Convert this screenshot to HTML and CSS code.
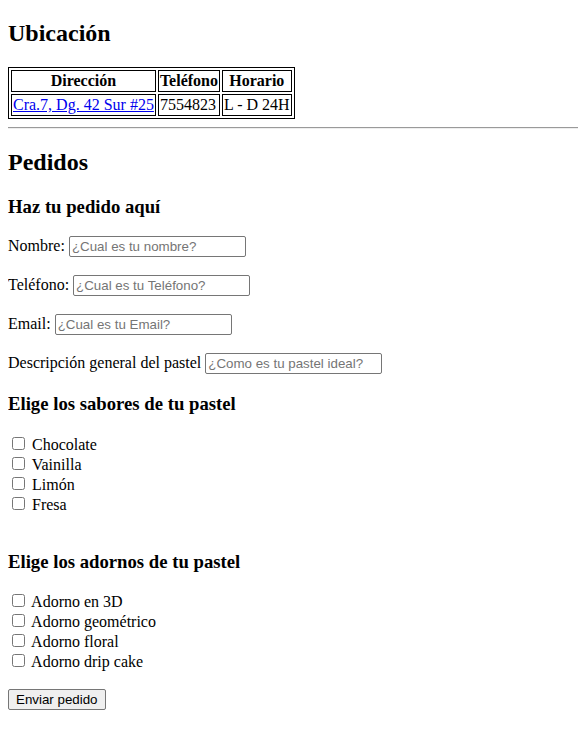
FILE: index.html
```html
<!DOCTYPE html>
<html lang="es">
<head>
<meta charset="utf-8">
<title>Pastelería</title>
<link rel="stylesheet" href="styles.css">
</head>
<body class="page">
<h2 class="title first">Ubicación</h2>
<table class="info">
  <tr>
    <th class="cell">Dirección</th>
    <th class="cell">Teléfono</th>
    <th class="cell">Horario</th>
  </tr>
  <tr>
    <td class="cell"><a class="link" href="#">Cra.7, Dg. 42 Sur #25</a></td>
    <td class="cell">7554823</td>
    <td class="cell">L - D 24H</td>
  </tr>
</table>
<hr class="rule">
<h2 class="title">Pedidos</h2>
<form class="order">
  <h3 class="subtitle">Haz tu pedido aquí</h3>
  <p class="field"><label>Nombre:</label> <input class="text-input" type="text" placeholder="¿Cual es tu nombre?"></p>
  <p class="field"><label>Teléfono:</label> <input class="text-input" type="text" placeholder="¿Cual es tu Teléfono?"></p>
  <p class="field"><label>Email:</label> <input class="text-input" type="text" placeholder="¿Cual es tu Email?"></p>
  <p class="field"><label>Descripción general del pastel</label> <input class="text-input" type="text" placeholder="¿Como es tu pastel ideal?"></p>
  <h3 class="subtitle">Elige los sabores de tu pastel</h3>
  <p class="options">
    <input class="check" type="checkbox"> Chocolate<br>
    <input class="check" type="checkbox"> Vainilla<br>
    <input class="check" type="checkbox"> Limón<br>
    <input class="check" type="checkbox"> Fresa<br><br>
  </p>
  <h3 class="subtitle">Elige los adornos de tu pastel</h3>
  <p class="options">
    <input class="check" type="checkbox"> Adorno en 3D<br>
    <input class="check" type="checkbox"> Adorno geométrico<br>
    <input class="check" type="checkbox"> Adorno floral<br>
    <input class="check" type="checkbox"> Adorno drip cake
  </p>
  <button class="submit" type="submit">Enviar pedido</button>
</form>
</body>
</html>
```
FILE: styles.css
```css
html {
  margin: 0;
  padding: 0;
}
.page {
  margin: 0 0 8px 8px;
  padding: 0;
  font-family: "Liberation Serif", "Times New Roman", serif;
  font-size: 16px;
  color: #000;
  background: #fff;
}
.title {
  font-size: 1.5em;
  font-weight: bold;
  margin: 0.83em 0;
}
.subtitle {
  font-size: 1.17em;
  font-weight: bold;
  margin: 1em 0;
}
.info {
  border: 1px solid #000;
  border-spacing: 2px;
  border-collapse: separate;
}
.cell {
  border: 1px solid #000;
  padding: 1px;
}
th.cell {
  font-weight: bold;
  text-align: center;
}
.link {
  color: #0000ee;
  text-decoration: underline;
}
.rule {
  border: 0;
  border-top: 1px solid #9a9a9a;
  border-bottom: 1px solid #eee;
  margin: 8px 0;
}
.field {
  margin: 18px 0;
}
.text-input {
  box-sizing: content-box;
  font-family: "Liberation Sans", Arial, sans-serif;
  font-size: 13.333px;
  border: 1px solid #767676;
  border-radius: 2px;
  padding: 2px 2px;
  width: 171px;
  height: 15px;
  margin: 0;
}
.text-input::placeholder {
  color: #757575;
}
.options {
  margin: 1em 0;
}
.check {
  margin: 3px 3px 3px 4px;
}
.submit {
  box-sizing: content-box;
  height: 15px;
  font-family: "Liberation Sans", Arial, sans-serif;
  font-size: 13.333px;
  padding: 2px 7px;
  border: 1px solid #767676;
  border-radius: 2px;
  background: #efefef;
  color: #000;
  margin: 2px 0 0;
}
```
